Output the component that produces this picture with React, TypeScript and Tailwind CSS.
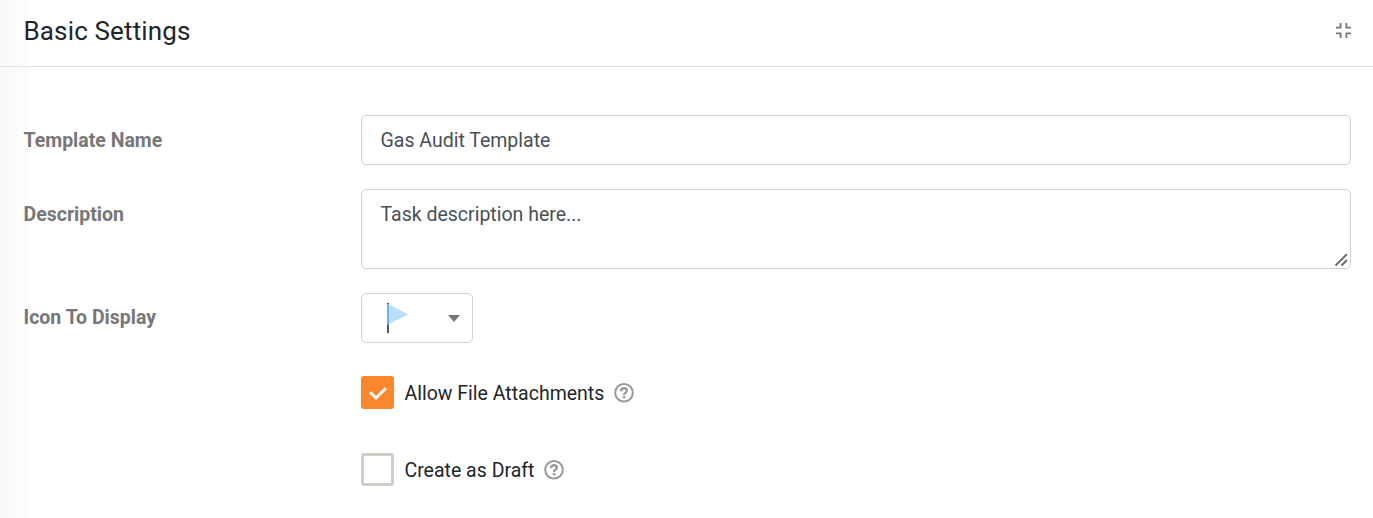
import React from "react";

function Help() {
  return (
    <svg className="ml-[10px] h-5 w-5 shrink-0" viewBox="0 0 20 20" fill="none" stroke="#999" strokeWidth="2">
      <circle cx="10" cy="9.800" r="8.800" />
      <path d="M7.200 8.200V7.800c0-1.600 1.200-2.500 2.800-2.500s2.800 1 2.800 2.400c0 2-2.700 1.900-2.700 4.200" strokeWidth="2.400" />
      <path d="M10.100 13v2.400" strokeWidth="2.600" />
    </svg>
  );
}

export default function App() {
  return (
    <div className="h-[518px] w-full overflow-hidden bg-white bg-[linear-gradient(to_right,#f8f8f8,#fdfdfd_22px,#fdfdfd_27px,#ffffff_28px)] font-['Roboto',sans-serif] text-[19.5px] leading-6 text-[#212529]">
      <header className="flex h-[67px] items-center justify-between border-b border-[#e2e2e4] pr-[22px] pb-[5px] pl-[23.5px]">
        <h1 className="text-[26px] leading-8 tracking-[0.14px] text-[#212529]">Basic Settings</h1>
        <svg className="h-[15px] w-[15px]" viewBox="0 0 15 15" fill="none" stroke="#777" strokeWidth="1.800">
          <path d="M0 4.600h4.600V0M10.400 0v4.600H15M0 10.400h4.600V15M15 10.400h-4.600V15" />
        </svg>
      </header>
      <main className="grid grid-cols-[337.500px_990px] gap-y-6 pt-12 pl-[23.5px]">
        <label htmlFor="name" className="pt-3.5 font-bold text-[#777]">Template Name</label>
        <input id="name" className="h-[50px] rounded-[5px] border border-[#ced0da] bg-white px-[18.500px] text-[#495057]" defaultValue="Gas Audit Template" />
        <label htmlFor="description" className="pt-3.5 font-bold text-[#777]">Description</label>
        <div className="relative h-20">
          <textarea id="description" className="block h-20 w-full resize-none rounded-[5px] border border-[#ced0da] bg-white px-[18.500px] pt-[13px] text-[#495057]" defaultValue="Task description here..." />
          <svg className="pointer-events-none absolute right-[3px] bottom-[2px] h-[13px] w-[13px]" viewBox="0 0 13 13" fill="none" stroke="#666" strokeWidth="1.800"><path d="M.5 11.500L12 0M6.500 11.500L12 6" /></svg>
        </div>
        <span className="pt-[13px] font-bold text-[#777]">Icon To Display</span>
        <button className="flex h-[50px] w-28 items-center justify-between rounded-[5px] border border-[#ced0da] bg-white pr-3 pl-6">
          <svg className="h-[30px] w-6" viewBox="0 0 24 30"><path d="M1 0h2v30H1z" fill="#455a64" /><path d="M2 1l20.500 10.500L2 21.500z" fill="#bbdefb" /><path d="M1 1h2v20.500H1z" fill="#64b5f6" /></svg>
          <svg className="mt-px h-[7px] w-3" viewBox="0 0 12 7"><path d="M0 0h12L6 7z" fill="#777" /></svg>
        </button>
      </main>
      <div className="mt-[33px] ml-[361px] flex h-[33px] items-center">
        <span className="mr-[10.500px] flex h-[33px] w-[33px] items-center justify-center rounded-[3px] bg-[#fa872d]">
          <svg className="mt-0.5 h-[14px] w-[18px]" viewBox="0 0 18 14" fill="none" stroke="white" strokeWidth="2.900"><path d="M1.200 5.200L7 11L16.800 1.200" /></svg>
        </span>
        <span className="pt-0.5">Allow File Attachments</span><Help />
      </div>
      <div className="mt-11 ml-[361px] flex h-[33px] items-center">
        <span className="mr-[10.500px] h-[33px] w-[33px] rounded-[3px] border-3 border-[#d1cec9] bg-white" />
        <span className="pt-0.5">Create as Draft</span><Help />
      </div>
    </div>
  );
}
